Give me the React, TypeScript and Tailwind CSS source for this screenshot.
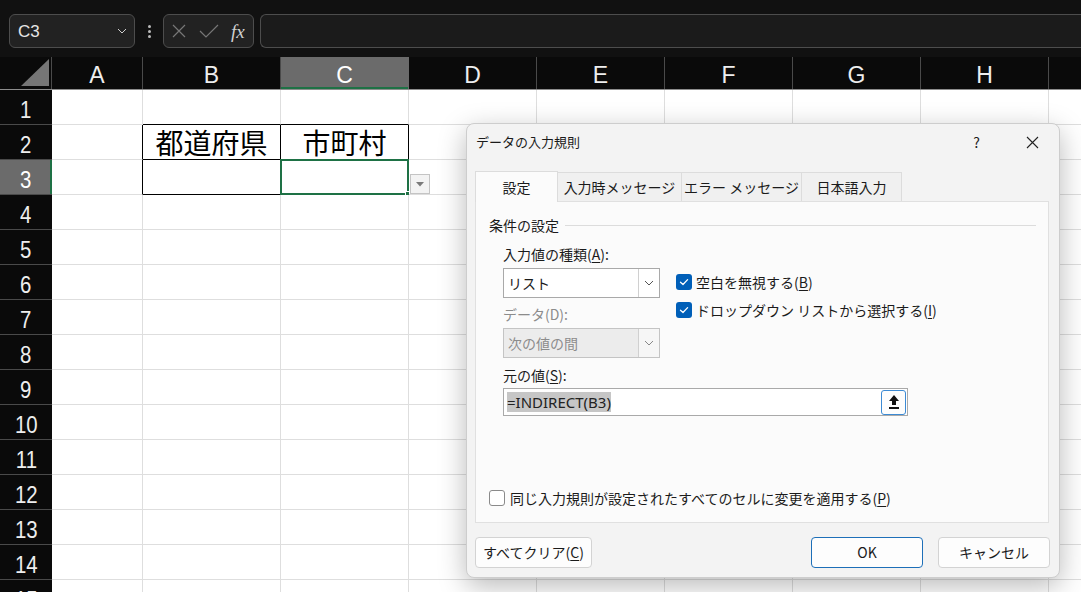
import React from "react";

const cols: [string, number][] = [
  ["A", 91],
  ["B", 138],
  ["C", 128],
  ["D", 128],
  ["E", 128],
  ["F", 128],
  ["G", 128],
  ["H", 128],
  ["I", 128],
];

const rows = Array.from({ length: 15 }, (_, i) => i + 1);

const jp = "font-['Noto_Sans_CJK_JP','Noto_Sans',sans-serif]";

function U({ ch }: { ch: string }) {
  return <span className="underline underline-offset-2">{ch}</span>;
}

function Check({ on }: { on: boolean }) {
  if (!on) return <span className="w-[16px] h-[16px] rounded-[3px] border border-[#8a8a8a] bg-white shrink-0" />;
  return (
    <span className="w-[16px] h-[16px] rounded-[3px] bg-[#005fb8] shrink-0 flex items-center justify-center">
      <svg width="10" height="10" viewBox="0 0 10 10" fill="none">
        <path d="M1.5 5.2 L4 7.5 L8.6 2.6" stroke="white" strokeWidth="1.3" strokeLinecap="round" strokeLinejoin="round" />
      </svg>
    </span>
  );
}

function Chevron({ color = "#555" }: { color?: string }) {
  return (
    <svg width="10" height="6" viewBox="0 0 10 6" fill="none">
      <path d="M1 1 L5 5 L9 1" stroke={color} strokeWidth="1" />
    </svg>
  );
}

function Cell({ r, c, w }: { r: number; c: number; w: number }) {
  const blackR = (r === 2 || r === 3) && c <= 2;
  const blackB = (c === 1 || c === 2) && r <= 3;
  const text = r === 2 && c === 1 ? "都道府県" : r === 2 && c === 2 ? "市町村" : "";
  return (
    <div
      style={{ width: w }}
      className={`relative h-[35px] shrink-0 bg-white border-r border-b flex items-center justify-center ${jp} text-[28px] leading-none text-black ${
        blackR ? "border-r-black" : "border-r-[#dedede]"
      } ${blackB ? "border-b-black" : "border-b-[#dedede]"}`}
    >
      {text}
      {r === 3 && c === 2 && (
        <>
          <div className="absolute -left-[1px] -top-[1px] -right-[1px] -bottom-[1px] border-2 border-[#1e7145]" />
          <div className="absolute -right-[4px] -bottom-[4px] w-[7px] h-[7px] bg-[#1e7145] border border-white" />
          <div className="absolute left-[calc(100%+2px)] top-[14px] w-[20px] h-[20px] bg-[#f3f3f3] border border-[#c4c4c4] flex items-center justify-center z-10">
            <svg width="8" height="5" viewBox="0 0 8 5">
              <path d="M0 0 H8 L4 4.5 Z" fill="#7a7a7a" />
            </svg>
          </div>
        </>
      )}
    </div>
  );
}

function Dialog() {
  return (
    <div className={`absolute left-[466px] top-[123px] w-[594px] h-[455px] rounded-[8px] bg-[#f3f3f3] border border-[#cdcdcd] shadow-[0_8px_28px_rgba(0,0,0,0.28)] flex flex-col ${jp} text-[14px] text-[#1b1b1b] z-20`}>
      <div className="h-[36px] flex items-center pl-[9px] pr-[20px] shrink-0">
        <span className="text-[13px]">データの入力規則</span>
        <span className="ml-auto text-[14px] mr-[46px]">?</span>
        <svg width="13" height="13" viewBox="0 0 13 13">
          <path d="M1 1 L12 12 M12 1 L1 12" stroke="#222" strokeWidth="1.1" />
        </svg>
      </div>

      <div className="mt-[11px] pl-[8px] flex items-end h-[30px] shrink-0">
        <div className="w-[83px] h-[31px] bg-[#fbfbfb] border border-[#dcdcdc] border-b-0 flex items-center justify-center -mb-[1px] relative z-10">設定</div>
        {[
          ["入力時メッセージ", 124],
          ["エラー メッセージ", 120],
          ["日本語入力", 100],
        ].map(([t, w]) => (
          <div
            key={t as string}
            style={{ width: w as number }}
            className="h-[29px] bg-[#f0f0f0] border border-[#dcdcdc] border-l-0 border-b-0 flex items-center justify-center"
          >
            {t}
          </div>
        ))}
      </div>

      <div className="ml-[8px] w-[574px] h-[322px] shrink-0 bg-[#fbfbfb] border border-[#e0e0e0] flex flex-col pt-[13px]">
        <div className="h-[20px] flex items-center pl-[13px] pr-[12px]">
          <span>条件の設定</span>
          <div className="flex-1 border-t border-[#dcdcdc] ml-[6px]" />
        </div>
        <div className="pl-[27px] flex flex-col">
          <div className="mt-[9px] h-[20px] flex items-center">
            入力値の種類(<U ch="A" />):
          </div>
          <div className="mt-[4px] flex">
            <div className="w-[157px] flex flex-col">
              <div className="h-[30px] bg-white border border-[#a9a9a9] flex items-center">
                <span className="pl-[4px] flex-1">リスト</span>
                <span className="w-[21px] h-full border-l border-[#d0d0d0] flex items-center justify-center">
                  <Chevron />
                </span>
              </div>
              <div className="mt-[6px] h-[20px] flex items-center text-[#8c8c8c]">データ(D):</div>
              <div className="mt-[4px] h-[30px] bg-[#ececec] border border-[#c4c4c4] flex items-center text-[#8c8c8c]">
                <span className="pl-[4px] flex-1">次の値の間</span>
                <span className="w-[21px] h-full border-l border-[#d0d0d0] bg-[#f6f6f6] flex items-center justify-center">
                  <Chevron color="#888" />
                </span>
              </div>
            </div>
            <div className="ml-[16px] pt-[3px] flex flex-col gap-[6px]">
              <div className="h-[22px] flex items-center gap-[4px]">
                <Check on />
                <span>
                  空白を無視する(<U ch="B" />)
                </span>
              </div>
              <div className="h-[22px] flex items-center gap-[4px]">
                <Check on />
                <span>
                  ドロップダウン リストから選択する(<U ch="I" />)
                </span>
              </div>
            </div>
          </div>
          <div className="mt-[7px] h-[20px] flex items-center">
            元の値(<U ch="S" />):
          </div>
          <div className="mt-[3px] w-[405px] h-[28px] bg-white border border-[#a9a9a9] flex items-center pl-[3px] pr-[1px]">
            <span className="bg-[#c6c6c6] text-[15px] leading-[20px] font-['Noto_Sans',sans-serif] text-[#222]">=INDIRECT(B3)</span>
            <span className="ml-auto w-[25px] h-[25px] rounded-[3px] border border-[#3d8bd4] bg-[#fdfdfd] flex items-center justify-center">
              <svg width="12" height="16" viewBox="0 0 12 16">
                <path d="M6 1 L11 7 H8 V11 H4 V7 H1 Z" fill="#111" />
                <rect x="1" y="13" width="10" height="2" fill="#111" />
              </svg>
            </span>
          </div>
        </div>
        <div className="mt-auto mb-[13px] pl-[13px] h-[22px] flex items-center gap-[5px]">
          <Check on={false} />
          <span>
            同じ入力規則が設定されたすべてのセルに変更を適用する(<U ch="P" />)
          </span>
        </div>
      </div>

      <div className="mt-[14px] pl-[8px] pr-[9px] flex items-center">
        <button className="w-[117px] h-[31px] rounded-[4px] bg-[#fdfdfd] border border-[#d3d3d3]">
          すべてクリア(<U ch="C" />)
        </button>
        <button className="ml-auto w-[112px] h-[31px] rounded-[4px] bg-[#fdfdfd] border border-[#1d6fb8]">OK</button>
        <button className="ml-[15px] w-[112px] h-[31px] rounded-[4px] bg-[#fdfdfd] border border-[#d3d3d3]">キャンセル</button>
      </div>
    </div>
  );
}

export default function App() {
  return (
    <div className="relative w-[1081px] h-[592px] overflow-hidden bg-[#0a0a0a] font-['Liberation_Sans',sans-serif]">
      {/* formula bar */}
      <div className="h-[57px] bg-[#111111] flex items-start pt-[14px] pl-[9px] gap-[6px]">
        <div className="w-[126px] h-[34px] rounded-[6px] border border-[#4d4d4d] bg-[#222] flex items-center pl-[8px] pr-[7px] text-[17px] text-[#e6e6e6]">
          <span className="pt-[2px]">C3</span>
          <span className="ml-auto">
            <Chevron color="#cfcfcf" />
          </span>
        </div>
        <div className="w-[16px] h-[34px] flex flex-col items-center justify-center gap-[2px]">
          <span className="w-[3px] h-[3px] bg-[#bbb] rounded-full" />
          <span className="w-[3px] h-[3px] bg-[#bbb] rounded-full" />
          <span className="w-[3px] h-[3px] bg-[#bbb] rounded-full" />
        </div>
        <div className="w-[91px] h-[34px] rounded-[6px] border border-[#4d4d4d] bg-[#222] flex items-center pl-[7px] gap-[12px]">
          <svg width="16" height="16" viewBox="0 0 16 16">
            <path d="M2 2 L14 14 M14 2 L2 14" stroke="#777" strokeWidth="1.2" />
          </svg>
          <svg width="20" height="16" viewBox="0 0 20 16">
            <path d="M1 8 L7 14 L19 2" stroke="#777" strokeWidth="1.2" fill="none" />
          </svg>
          <span className="font-['Liberation_Serif',serif] italic text-[19px] text-[#d0d0d0] leading-none">fx</span>
        </div>
        <div className="flex-1 h-[34px] rounded-l-[6px] border border-r-0 border-[#4d4d4d] bg-[#1b1b1b]" />
      </div>

      {/* column headers */}
      <div className="flex h-[33px] border-b border-[#8d8d8d]">
        <div className="w-[52px] shrink-0 border-r border-[#4a4a4a] flex items-end justify-end pr-[2px] pb-[3px]">
          <svg width="28" height="27" viewBox="0 0 28 27">
            <path d="M28 0 V27 H0 Z" fill="#767676" />
          </svg>
        </div>
        {cols.map(([n, w]) => (
          <div
            key={n}
            style={{ width: w }}
            className={`shrink-0 flex items-center justify-center pt-[5px] text-[23px] border-r ${
              n === "C" ? "bg-[#6b6b6b] text-white border-r-[#6b6b6b] shadow-[inset_0_-2px_0_#1e7145]" : "text-[#eeeeee] border-r-[#4a4a4a]"
            }`}
          >
            {n}
          </div>
        ))}
      </div>

      {/* rows */}
      {rows.map((r) => (
        <div key={r} className="flex">
          <div
            className={`w-[52px] h-[35px] shrink-0 flex items-center justify-center pt-[5px] text-[24px] border-b border-[#4a4a4a] ${
              r === 3 ? "bg-[#6b6b6b] text-white shadow-[inset_-2px_0_0_#1e7145]" : "bg-[#0a0a0a] text-[#eeeeee]"
            }`}
          >
            <span className="inline-block scale-x-[0.85]">{r}</span>
          </div>
          {cols.map(([n, w], c) => (
            <Cell key={n} r={r} c={c} w={w} />
          ))}
        </div>
      ))}

      <Dialog />
    </div>
  );
}
